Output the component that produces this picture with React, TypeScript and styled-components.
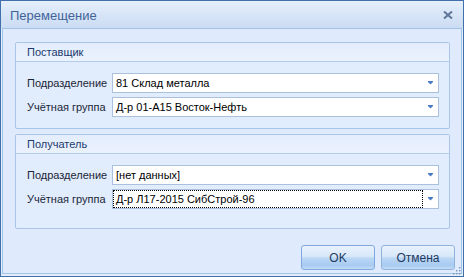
import React from "react";
import styled, { createGlobalStyle } from "styled-components";

const GlobalStyle = createGlobalStyle`
  html, body {
    margin: 0;
    padding: 0;
    background: #ffffff;
  }
  body {
    font-family: "Liberation Sans", Arial, sans-serif;
  }
`;

const Window = styled.div`
  width: 464px;
  height: 277px;
  box-sizing: border-box;
  border: 1px solid #4170ab;
  background: #e2edfb;
  display: flex;
  flex-direction: column;
  position: relative;
`;

const TitleBar = styled.div`
  height: 27px;
  flex: none;
  display: flex;
  align-items: center;
  justify-content: space-between;
  padding: 0 8px 0 9px;
  background: linear-gradient(to bottom, #e6effb 0%, #dae7f8 40%, #cbdcf3 100%);
`;

const Title = styled.span`
  font-size: 13px;
  color: #42639a;
  padding-top: 1px;
`;

const CloseButton = styled.div`
  width: 12px;
  height: 12px;
  display: flex;
  align-items: center;
  justify-content: center;
  margin-right: 1px;
`;

const Client = styled.div`
  flex: 1;
  margin: 0 1px 2px 1px;
  border: 1px solid #a3c2ea;
  background: #dfeafc;
  padding: 13px 6px 3px 12px;
  display: flex;
  flex-direction: column;
`;

const Groups = styled.div`
  display: flex;
  flex-direction: column;
  gap: 5px;
  margin-right: 5px;
`;

const Group = styled.div<{ $bottom: number }>`
  border: 1px solid #a9c6ea;
  border-radius: 2px;
  background: #e1ecfc;
  padding-bottom: ${(p) => p.$bottom}px;
`;

const GroupHeader = styled.div`
  height: 18px;
  border-bottom: 1px solid #b3cdee;
  background: linear-gradient(to bottom, #e3edfc 0%, #ebf2fd 100%);
  display: flex;
  align-items: center;
  padding-left: 11px;
  font-size: 11px;
  color: #1c3a6e;
  margin-bottom: 11px;
`;

const Fields = styled.div`
  display: flex;
  flex-direction: column;
  gap: 4px;
  padding: 0 10px 0 11px;
`;

const FieldRow = styled.div`
  display: grid;
  grid-template-columns: 85px 1fr;
  align-items: center;
`;

const Label = styled.span`
  font-size: 11px;
  color: #1a2638;
`;

const Combo = styled.div`
  height: 20px;
  box-sizing: border-box;
  border: 1px solid #abc0dd;
  background: #ffffff;
  display: flex;
  align-items: stretch;
`;

const EditArea = styled.div<{ $focused?: boolean }>`
  flex: 1;
  padding-left: 2px;
  display: flex;
  align-items: center;
  font-size: 11px;
  color: #000000;
  border: 1px ${(p) => (p.$focused ? "dotted #000000" : "solid transparent")};
  white-space: nowrap;
`;

const ArrowBox = styled.div`
  width: 14px;
  display: flex;
  align-items: center;
  justify-content: center;
  padding-right: 1px;
`;

const ButtonRow = styled.div`
  margin-top: auto;
  display: flex;
  justify-content: flex-end;
  gap: 6px;
`;

const Button = styled.div<{ $default?: boolean }>`
  width: 74px;
  height: 25px;
  box-sizing: border-box;
  border: 1px solid ${(p) => (p.$default ? "#7fa9de" : "#8fb2de")};
  border-radius: 3px;
  background: linear-gradient(
    to bottom,
    #e9f2fd 0%,
    #d8e8fa 45%,
    #bcd7f5 52%,
    #a8cbf1 85%,
    #c4ddf6 100%
  );
  display: flex;
  align-items: center;
  justify-content: center;
  font-size: 12px;
  color: #1e3a61;
`;

const Grip = styled.div`
  position: absolute;
  right: 2px;
  bottom: 3px;
  width: 10px;
  height: 10px;
`;

const ComboArrow = () => (
  <svg width="5" height="4" viewBox="0 0 5 4">
    <path d="M0 0h5v1L2.5 3.5 0 1z" fill="#4a79c6" />
  </svg>
);

interface FieldProps {
  label: string;
  value: string;
  focused?: boolean;
}

const Field = ({ label, value, focused }: FieldProps) => (
  <FieldRow>
    <Label>{label}</Label>
    <Combo>
      <EditArea $focused={focused}>{value}</EditArea>
      <ArrowBox>
        <ComboArrow />
      </ArrowBox>
    </Combo>
  </FieldRow>
);

export default function App() {
  return (
    <>
      <GlobalStyle />
      <Window>
        <TitleBar>
          <Title>Перемещение</Title>
          <CloseButton>
            <svg width="10" height="8" viewBox="0 0 10 8">
              <path d="M1 0.5l8 7M9 0.5l-8 7" stroke="#5f7699" strokeWidth="2" />
            </svg>
          </CloseButton>
        </TitleBar>
        <Client>
          <Groups>
            <Group $bottom={11}>
              <GroupHeader>Поставщик</GroupHeader>
              <Fields>
                <Field label="Подразделение" value="81 Склад металла" />
                <Field label="Учётная группа" value="Д-р 01-А15 Восток-Нефть" />
              </Fields>
            </Group>
            <Group $bottom={19}>
              <GroupHeader>Получатель</GroupHeader>
              <Fields>
                <Field label="Подразделение" value="[нет данных]" />
                <Field label="Учётная группа" value="Д-р Л17-2015 СибСтрой-96" focused />
              </Fields>
            </Group>
          </Groups>
          <ButtonRow>
            <Button $default>OK</Button>
            <Button>Отмена</Button>
          </ButtonRow>
        </Client>
        <Grip>
          <svg width="10" height="10" viewBox="0 0 10 10">
            <g fill="#ffffff">
              <rect x="9" y="1" width="1" height="1" />
              <rect x="6" y="4" width="1" height="1" />
              <rect x="9" y="4" width="1" height="1" />
              <rect x="3" y="7" width="1" height="1" />
              <rect x="6" y="7" width="1" height="1" />
              <rect x="9" y="7" width="1" height="1" />
            </g>
            <g fill="#7897c2">
              <rect x="8" y="0" width="1.5" height="1.5" />
              <rect x="5" y="3" width="1.5" height="1.5" />
              <rect x="8" y="3" width="1.5" height="1.5" />
              <rect x="2" y="6" width="1.5" height="1.5" />
              <rect x="5" y="6" width="1.5" height="1.5" />
              <rect x="8" y="6" width="1.5" height="1.5" />
            </g>
          </svg>
        </Grip>
      </Window>
    </>
  );
}
